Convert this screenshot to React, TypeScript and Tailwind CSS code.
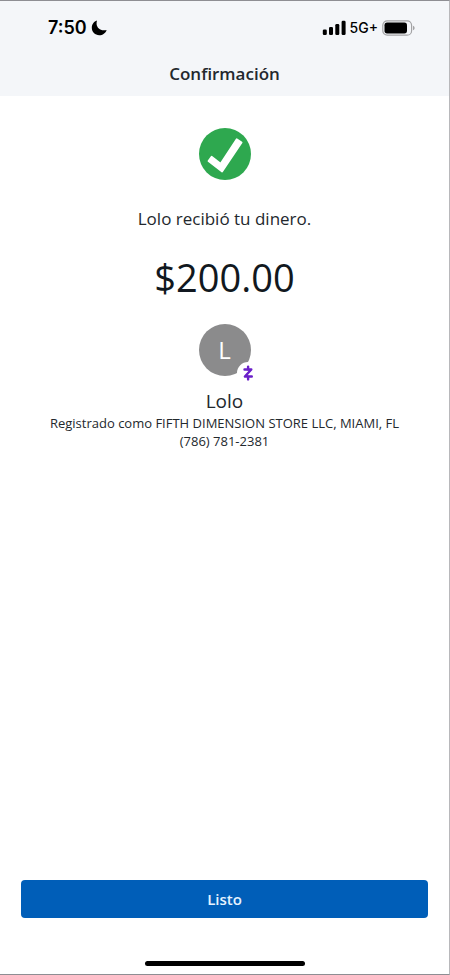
const StatusBar = () => (
  <div className="flex h-[54px] items-center justify-between pr-[34px] pl-12 font-['Inter',sans-serif] text-black">
    <div className="flex items-center gap-1">
      <span className="text-lg font-semibold">7:50</span>
      <svg className="h-4 w-4" viewBox="0 0 16 16" fill="currentColor" aria-hidden="true">
        <path d="M6 .6C2.900 1.600.8 4.400.8 7.800c0 4.100 3.300 7.400 7.400 7.400 3.500 0 6.400-2.100 7.400-5.300-1 .3-2 .5-3 .4C8.900 10.200 6 7.600 5.600 4.200 5.500 2.900 5.600 1.700 6 .6z" />
      </svg>
    </div>
    <div className="flex items-center gap-1">
      <svg className="h-4 w-6" viewBox="0 0 24 16" fill="currentColor" aria-hidden="true">
        <rect x="0.800" y="9.500" width="4" height="5.500" rx="1.300" />
        <rect x="7" y="7" width="4" height="8" rx="1.300" />
        <rect x="13.300" y="4" width="4" height="11" rx="1.300" />
        <rect x="19.600" y="0.800" width="4" height="14.200" rx="1.300" />
      </svg>
      <span className="text-sm font-medium">5G+</span>
      <svg className="h-4 w-[33px]" viewBox="0 0 33 16" aria-hidden="true">
        <rect x="0.800" y="0.800" width="28.800" height="14.400" rx="4.500" fill="none" stroke="#a3a3a5" strokeWidth="1.200" />
        <rect x="2.500" y="2.600" width="22.500" height="10.800" rx="2.600" fill="#000" />
        <path d="M31 5.800c1.300.5 1.600 1.300 1.600 2.200s-.3 1.700-1.600 2.200z" fill="#a3a3a5" />
      </svg>
    </div>
  </div>
);

const CheckIcon = () => (
  <svg className="h-[52px] w-[52px]" viewBox="0 0 52 52" aria-hidden="true">
    <circle cx="26" cy="26" r="26" fill="#2ea84f" />
    <path
      d="M12.600 28.800L21.600 35.700L37.700 11.300L42.600 14.600L23.100 43.600L9.500 33z"
      fill="#fff"
      stroke="#fff"
      strokeWidth="1.800"
      strokeLinejoin="round"
    />
  </svg>
);

const Avatar = ({ initial }: { initial: string }) => (
  <div className="relative flex h-[52px] w-[52px] items-center justify-center rounded-full bg-[#8b8b8c] text-2xl text-white">
    {initial}
    <span className="absolute -right-2 -bottom-2 flex h-[22px] w-[22px] items-center justify-center rounded-full bg-white">
      <svg className="h-4 w-3" viewBox="0 0 12 16" fill="none" stroke="#6a1fc9" aria-hidden="true">
        <path d="M2.500 4.500h6.800L2.900 11.500h6.900" strokeWidth="2.400" strokeLinecap="round" strokeLinejoin="round" />
        <path d="M6.100 1.600v2.800M6.100 11.600v2.800" strokeWidth="2.400" strokeLinecap="round" />
      </svg>
    </span>
  </div>
);

export default function App() {
  return (
    <div className="flex min-h-screen flex-col border-t border-r border-b border-[#8e8e93] border-r-[#b8b8bb] bg-white font-['Open_Sans',sans-serif] text-[#23282d]">
      <header className="bg-[#f4f6f9] pb-2">
        <StatusBar />
        <h1 className="pt-[5px] text-center text-[17px] leading-7 font-semibold">Confirmación</h1>
      </header>

      <main className="flex flex-1 flex-col items-center px-5 pt-8 text-center">
        <CheckIcon />
        <p className="mt-[27px] text-[17px] leading-6">Lolo recibió tu dinero.</p>
        <p className="mt-[23px] text-[38px] leading-[46px] text-[#111820]">$200.00</p>
        <div className="mt-6">
          <Avatar initial="L" />
        </div>
        <h2 className="mt-3 text-[19px] leading-[26px]">Lolo</h2>
        <p className="text-[13px] leading-[18px]">Registrado como FIFTH DIMENSION STORE LLC, MIAMI, FL</p>
        <p className="text-[13px] leading-[18px]">(786) 781-2381</p>
      </main>

      <footer className="px-[21px] pb-2">
        <button type="button" className="h-[38px] w-full rounded bg-[#005eb8] text-[15px] font-semibold text-[#e6f3ff]">
          Listo
        </button>
        <div className="mx-auto mt-[43px] h-[5px] w-40 rounded-full bg-black" />
      </footer>
    </div>
  );
}
